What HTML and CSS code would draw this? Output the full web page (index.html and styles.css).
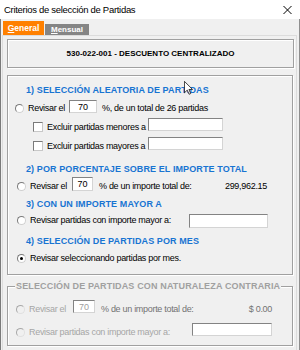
FILE: index.html
```html
<!DOCTYPE html>
<html lang="es">
<head>
  <meta charset="UTF-8" />
  <title>Criterios de selección de Partidas</title>
  <link rel="stylesheet" href="styles.css">
</head>
<body>
  <div class="window">
    <div class="titlebar">
      <span class="title">Criterios de selección de Partidas</span>
      <svg class="close" width="9" height="8" viewBox="0 0 9 8">
        <path d="M0.5 0 L8.5 8 M8.5 0 L0.5 8" stroke="#000" stroke-width="1" fill="none" />
      </svg>
    </div>

    <div class="frame">
      <div class="tabs">
        <div class="tab active"><u>G</u>eneral</div>
        <div class="tab inactive"><u>M</u>ensual</div>
      </div>

      <div class="page">
        <div class="account">530-022-001 - DESCUENTO CENTRALIZADO</div>

        <div class="group criteria">
          <div class="heading">1) SELECCIÓN ALEATORIA DE PARTIDAS</div>
          <div class="row opt-random">
            <span class="radio"></span>
            <span class="label w-pct">Revisar el</span>
            <input class="field pct" type="text" value="70" />
            <span class="after">%, de un total de 26 partidas</span>
          </div>
          <div class="row sub">
            <span class="check"></span>
            <span class="label w-excl">Excluir partidas menores a</span>
            <input class="field excl" type="text" value="" />
          </div>
          <div class="row sub">
            <span class="check"></span>
            <span class="label w-excl">Excluir partidas mayores a</span>
            <input class="field excl" type="text" value="" />
          </div>

          <div class="heading h-percent">2) POR PORCENTAJE SOBRE EL IMPORTE TOTAL</div>
          <div class="row opt opt-percent">
            <span class="radio"></span>
            <span class="label w-pct2">Revisar el</span>
            <input class="field pct2" type="text" value="70" />
            <span class="after wide">% de un importe total de:</span>
            <span class="total">299,962.15</span>
          </div>

          <div class="heading h-amount">3) CON UN IMPORTE MAYOR A</div>
          <div class="row opt">
            <span class="radio"></span>
            <span class="label w-greater">Revisar partidas con importe mayor a:</span>
            <input class="field greater" type="text" value="" />
          </div>

          <div class="heading h-month">4) SELECCIÓN DE PARTIDAS POR MES</div>
          <div class="row opt opt-month">
            <span class="radio checked"></span>
            <span class="label">Revisar seleccionando partidas por mes.</span>
          </div>
        </div>

        <div class="group contra">
          <span class="legend">SELECCIÓN DE PARTIDAS CON NATURALEZA CONTRARIA</span>
          <div class="row off">
            <span class="radio"></span>
            <span class="label w-pct3">Revisar el</span>
            <input class="field pct3" type="text" value="70" disabled />
            <span class="after wide">% de un importe total de:</span>
            <span class="total">$ 0.00</span>
          </div>
          <div class="row off second">
            <span class="radio"></span>
            <span class="label w-greater2">Revisar partidas con importe mayor a:</span>
            <input class="field greater2" type="text" value="" disabled />
          </div>
        </div>
      </div>
    </div>

    <svg class="cursor" width="9" height="14" viewBox="0 0 12 19">
      <path d="M0.5 0.5 V16 L4.3 12.4 L6.8 18 L9 17 L6.6 11.5 H11.5 Z" fill="#fff" stroke="#000" stroke-width="1" />
    </svg>
  </div>
</body>
</html>
```

FILE: styles.css
```css
body {
  margin: 0;
  background: #f0f0f0;
  font-family: "Liberation Sans", Arial, sans-serif;
  font-size: 9px;
  letter-spacing: -0.3px;
  color: #000;
}
.window {
  position: relative;
  width: 300px;
  height: 350px;
  overflow: hidden;
  display: flex;
  flex-direction: column;
}
.titlebar {
  flex: none;
  height: 19px;
  background: #fff;
  display: flex;
  align-items: center;
  justify-content: space-between;
  padding: 0 8px 0 4px;
}
.title {
  font-size: 9.5px;
  letter-spacing: -0.3px;
}
.frame {
  flex: 1;
  display: flex;
  flex-direction: column;
  border-left: 1px solid #7a7a7a;
  border-right: 1px solid #8f8f8f;
  padding-right: 2px;
}
.tabs {
  flex: none;
  height: 16px;
  display: flex;
  align-items: flex-end;
  gap: 1px;
  padding-left: 2px;
}
.tab {
  display: flex;
  align-items: center;
  justify-content: center;
  font-weight: bold;
  letter-spacing: 0;
  color: #fff;
}
.tab.active {
  width: 41px;
  height: 14px;
  background: #ff8000;
  font-size: 8.5px;
}
.tab.inactive {
  width: 44px;
  height: 11px;
  background: #858585;
  font-size: 8px;
  color: #fff;
}
.page {
  flex: 1;
  margin-left: 1px;
  border: 1px solid #dcdcdc;
  border-bottom: none;
  padding: 3px 0 0 0;
}
.account {
  box-sizing: border-box;
  height: 29px;
  margin: 0 2px 0 4px;
  display: flex;
  align-items: center;
  justify-content: center;
  font-weight: bold;
  font-size: 8px;
  letter-spacing: 0;
  border: 1px solid #a0a0a0;
  box-shadow: inset 1px 1px 0 #fff, 1px 1px 0 #fff;
}
.group {
  position: relative;
  box-sizing: border-box;
  margin: 7px 3px 0 4px;
  border: 1px solid #a0a0a0;
  box-shadow: inset 1px 1px 0 #fff, 1px 1px 0 #fff;
}
.criteria {
  height: 200px;
  padding: 8px 0 7px;
}
.contra {
  height: 60px;
  margin-top: 11px;
  padding: 13px 0 4px;
}
.legend {
  position: absolute;
  top: -7px;
  left: 7px;
  padding: 0 1px;
  line-height: 12px;
  background: #f0f0f0;
  color: #a0a0a0;
  font-weight: bold;
  font-size: 9px;
  letter-spacing: 0.15px;
}
.heading {
  line-height: 12px;
  padding-left: 18px;
  color: #1874d2;
  font-weight: bold;
  font-size: 9px;
  letter-spacing: 0.1px;
}
.h-percent { margin-top: 8px; }
.h-amount { margin-top: 3px; }
.h-month { margin-top: 6px; }

.row {
  display: flex;
  align-items: center;
  height: 18px;
  margin-top: 1px;
  padding-left: 9px;
}
.opt-random {
  margin-top: 3px;
  padding-left: 7px;
}
.row.sub { padding-left: 25px; }
.opt-percent { margin-top: 2px; padding-right: 25px; }
.opt-month { margin-top: 2px; }
.row.off { margin-top: 0; padding-left: 8px; padding-right: 20px; }
.row.off.second { margin-top: 5px; }

.label {
  margin-left: 4px;
  white-space: nowrap;
}
.w-pct { width: 41px; }
.w-excl { width: 101px; }
.w-pct2 { width: 42px; }
.w-greater { width: 159px; }
.w-pct3 { width: 44px; }
.w-greater2 { width: 165px; }

.after { margin-left: 5px; }
.after.wide { margin-left: 6px; }
.total { margin-left: auto; }

.field {
  box-sizing: border-box;
  align-self: flex-start;
  height: 13px;
  margin: 0;
  padding: 0;
  background: #fff;
  border: 1px solid;
  border-color: #838383 #d4d4d4 #d4d4d4 #838383;
  font: inherit;
  letter-spacing: 0;
  text-align: center;
  color: #000;
}
.pct { width: 28px; margin-top: 1px; }
.excl { width: 75px; }
.pct2 { width: 21px; height: 14px; }
.greater { width: 79px; height: 14px; margin-top: 3px; }
.pct3 { width: 22px; }
.greater2 { width: 80px; }

.radio {
  box-sizing: border-box;
  flex: none;
  width: 9px;
  height: 9px;
  border-radius: 50%;
  border: 1px solid;
  border-color: #7a7a7a #d0d0d0 #d0d0d0 #7a7a7a;
  background: #fff;
  position: relative;
}
.radio.checked::after {
  content: "";
  position: absolute;
  left: 2px;
  top: 2px;
  width: 3px;
  height: 3px;
  border-radius: 50%;
  background: #000;
}
.check {
  box-sizing: border-box;
  flex: none;
  width: 10px;
  height: 10px;
  border: 1px solid;
  border-color: #7a7a7a #c8c8c8 #c8c8c8 #7a7a7a;
  background: #fff;
}
.off .label { color: #a6a6a6; }
.off .after, .off .total { color: #737373; }
.off .radio {
  background: #f0f0f0;
  border-color: #a8a8a8 #e0e0e0 #e0e0e0 #a8a8a8;
}
.off .field { color: #a0a0a0; }

.cursor {
  position: absolute;
  left: 184px;
  top: 81px;
}
```
